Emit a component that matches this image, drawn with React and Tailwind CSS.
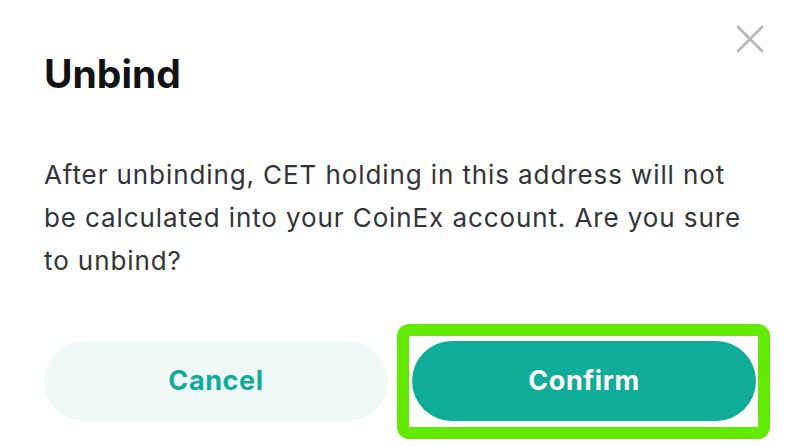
import React from "react"

function CloseIcon() {
  return (
    <svg className="w-[28px] h-[28px]" viewBox="0 0 28 28" fill="none" stroke="#b4b6b9" strokeWidth="2.6" strokeLinecap="round">
      <path d="M2 2L26 26M26 2L2 26" />
    </svg>
  )
}

export default function App() {
  return (
    <div className="relative w-[800px] h-[446px] bg-white px-[44px] font-['Inter',sans-serif] overflow-hidden">
      {/* close */}
      <button className="absolute top-[25px] left-[736px] p-0">
        <CloseIcon />
      </button>

      <h2 className="pt-[50px] text-[39px] leading-[48px] font-bold text-[#111214]">Unbind</h2>

      <p className="mt-[55px] w-[712px] text-[26px] leading-[43px] tracking-[0.9px] text-[#333438]">
        After unbinding, CET holding in this address will not be calculated into your CoinEx account. Are you sure to unbind?
      </p>

      <div className="mt-[59px] flex gap-[24px]">
        <button className="w-[344px] h-[80px] rounded-full bg-[#f1f9f8] text-[#10ab96] text-[27px] font-bold tracking-[0.6px]">
          Cancel
        </button>
        <div className="relative">
          <button className="w-[344px] h-[80px] rounded-full bg-[#0fac97] text-white text-[27px] font-bold tracking-[0.6px]">
            Confirm
          </button>
          <div className="absolute -left-[15px] -right-[14px] -top-[17px] -bottom-[18px] border-[12px] border-[#63ea02] rounded-[12px] pointer-events-none"></div>
        </div>
      </div>
    </div>
  )
}
